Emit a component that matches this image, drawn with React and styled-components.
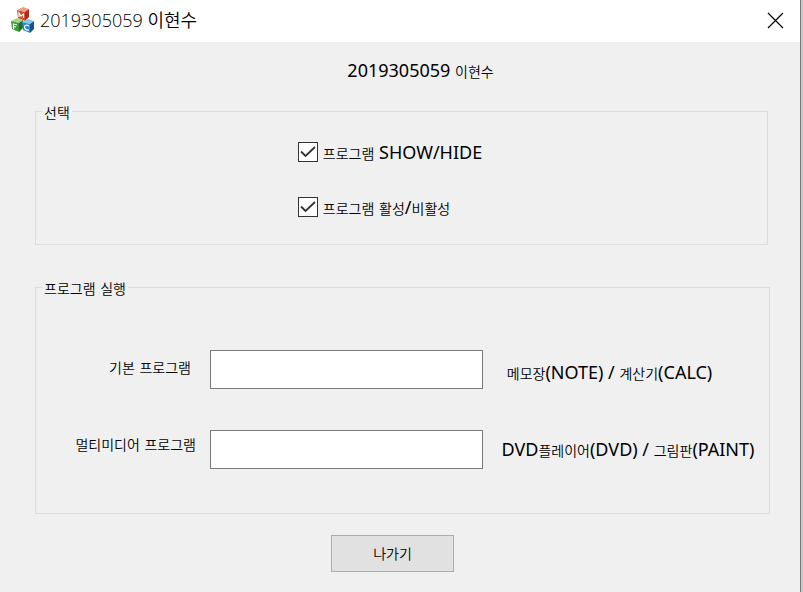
import React from 'react';
import styled, { createGlobalStyle } from 'styled-components';

const GlobalStyle = createGlobalStyle`
  *, *::before, *::after { box-sizing: border-box; }
  body {
    margin: 0;
    background: #c8c8c8;
    color: #000;
    font-family: "Noto Sans", "Noto Sans CJK KR", sans-serif;
    font-size: 18px;
    line-height: 24px;
  }
`;

const Window = styled.div`
  display: flex;
  flex-direction: column;
  min-height: 100vh;
  margin-right: 2px;
  border-right: 1px solid #777;
  background: #f0f0f0;
`;

const TitleBar = styled.header`
  display: flex;
  align-items: center;
  height: 42px;
  padding: 0 16px 2px 10px;
  background: #fff;
`;

const Title = styled.h1`
  flex: 1;
  margin: 0 0 0 6px;
  font-family: "Open Sans", "Noto Sans CJK KR", sans-serif;
  font-size: 18px;
  font-weight: 350;
  line-height: 24px;
  white-space: nowrap;
`;

const CloseButton = styled.button`
  display: flex;
  padding: 0;
  border: 0;
  background: transparent;
`;

const Hangul = styled.span`
  font-family: "Noto Sans CJK KR", sans-serif;
  font-size: 14px;
  font-weight: 350;
  line-height: 20px;
`;

const Content = styled.main`
  display: flex;
  flex-direction: column;
  padding: 16px 30px 20px 35px;
`;

const Heading = styled.p`
  margin: 0;
  padding-left: 36px;
  text-align: center;
  white-space: nowrap;
`;

const Group = styled.fieldset`
  min-width: 0;
  margin: ${(p) => p.$margin};
  padding: ${(p) => p.$padding};
  border: 1px solid #dcdcdc;
`;

const Legend = styled.legend`
  margin-left: 6px;
  padding: 0 2px;
  white-space: nowrap;
`;

const Options = styled.div`
  display: flex;
  flex-direction: column;
  gap: 31px;
  width: max-content;
  margin: 0 auto;
`;

const Option = styled.label`
  display: flex;
  align-items: center;
  gap: 5px;
  white-space: nowrap;
`;

const TickBox = styled.span`
  display: grid;
  > * { grid-area: 1 / 1; }
  svg { pointer-events: none; visibility: hidden; }
  input:checked + svg { visibility: visible; }
`;

const TickInput = styled.input`
  appearance: none;
  width: 20px;
  height: 20px;
  margin: 0;
  border: 1px solid #333;
  background: #fff;
`;

const Fields = styled.div`
  display: flex;
  align-items: flex-start;
`;

const Labels = styled.div`
  display: flex;
  flex-direction: column;
  align-items: flex-end;
  gap: 53px;
  width: 160px;
  padding-top: 4px;
`;

const Inputs = styled.div`
  display: flex;
  flex: 1;
  flex-direction: column;
  gap: 41px;
  min-width: 80px;
  margin: 0 15px 0 14px;
`;

const Hints = styled.div`
  display: flex;
  flex-direction: column;
  gap: 53px;
  width: 260px;
  padding-top: 10px;
`;

const FieldLabel = styled.label`
  min-width: ${(p) => p.$width};
  text-align: center;
  white-space: nowrap;
`;

const Hint = styled.span`
  width: ${(p) => p.$width};
  text-align: center;
  white-space: nowrap;
`;

const TextBox = styled.input`
  width: 100%;
  height: 39px;
  padding: 0 6px;
  border: 1px solid #7a7a7a;
  border-radius: 0;
  background: #fff;
  font: inherit;
`;

const Actions = styled.footer`
  display: flex;
  justify-content: center;
  padding: 21px 20px 0 0;
`;

const ExitButton = styled.button`
  width: 123px;
  height: 37px;
  padding: 0 0 3px;
  border: 1px solid #adadad;
  background: #e1e1e1;
  color: #000;
  font: inherit;
`;

function Mixed({ children }) {
  return children
    .split(/([가-힣]+)/)
    .filter(Boolean)
    .map((part, i) => (/[가-힣]/.test(part) ? <Hangul key={i}>{part}</Hangul> : part));
}

function Cube({ x, y, top, left, right, mark }) {
  return (
    <g transform={`translate(${x} ${y})`}>
      <path d="M0 3 6 0 12 2 8 5Z" fill={top} />
      <path d="M0 3 8 5V14L1 11Z" fill={left} />
      <path d="M8 5 12 2V10L8 14Z" fill={right} />
      <path d={mark} fill="none" stroke="#fff" strokeWidth="1.2" />
    </g>
  );
}

function AppIcon() {
  return (
    <svg width="24" height="26" viewBox="0 0 24 26" aria-hidden="true">
      <Cube x={7} y={0} top="#f0a080" left="#d8482c" right="#b02c18" mark="M2 10V6L4 9 6.500 7V11" />
      <Cube x={1} y={11} top="#a6d67c" left="#3c9838" right="#1f7024" mark="M2.500 11V6L6 7M2.500 8.500 5 9" />
      <Cube x={12} y={12} top="#86c7ed" left="#2f86cc" right="#175093" mark="M7 7C4 5 2.500 6.500 2.500 8S4 11.500 7 11" />
    </svg>
  );
}

function CheckOption({ children }) {
  return (
    <Option>
      <TickBox>
        <TickInput type="checkbox" defaultChecked />
        <svg width="20" height="20" viewBox="0 0 20 20" aria-hidden="true">
          <path d="M3 9.500 7.500 14 17 5" fill="none" stroke="#333" strokeWidth="1.800" />
        </svg>
      </TickBox>
      <span><Mixed>{children}</Mixed></span>
    </Option>
  );
}

export default function App() {
  return (
    <>
      <GlobalStyle />
      <Window>
        <TitleBar>
          <AppIcon />
          <Title>2019305059 이현수</Title>
          <CloseButton type="button" aria-label="닫기">
            <svg width="17" height="17" viewBox="0 0 17 17" aria-hidden="true">
              <path d="M1 1 16 16M16 1 1 16" stroke="#000" strokeWidth="1.200" />
            </svg>
          </CloseButton>
        </TitleBar>
        <Content>
          <Heading><Mixed>2019305059 이현수</Mixed></Heading>
          <Group $margin="17px 2px 0 0" $padding="17px 23px 25px 0">
            <Legend><Mixed>선택</Mixed></Legend>
            <Options>
              <CheckOption>프로그램 SHOW/HIDE</CheckOption>
              <CheckOption>프로그램 활성/비활성</CheckOption>
            </Options>
          </Group>
          <Group $margin="30px 0 0" $padding="51px 11px 44px 0">
            <Legend><Mixed>프로그램 실행</Mixed></Legend>
            <Fields>
              <Labels>
                <FieldLabel htmlFor="basic" $width="92px"><Mixed>기본 프로그램</Mixed></FieldLabel>
                <FieldLabel htmlFor="media" $width="92px"><Mixed>멀티미디어 프로그램</Mixed></FieldLabel>
              </Labels>
              <Inputs>
                <TextBox id="basic" type="text" />
                <TextBox id="media" type="text" />
              </Inputs>
              <Hints>
                <Hint $width="223px"><Mixed>메모장(NOTE) / 계산기(CALC)</Mixed></Hint>
                <Hint $width="260px"><Mixed>DVD플레이어(DVD) / 그림판(PAINT)</Mixed></Hint>
              </Hints>
            </Fields>
          </Group>
          <Actions>
            <ExitButton type="button"><Mixed>나가기</Mixed></ExitButton>
          </Actions>
        </Content>
      </Window>
    </>
  );
}
